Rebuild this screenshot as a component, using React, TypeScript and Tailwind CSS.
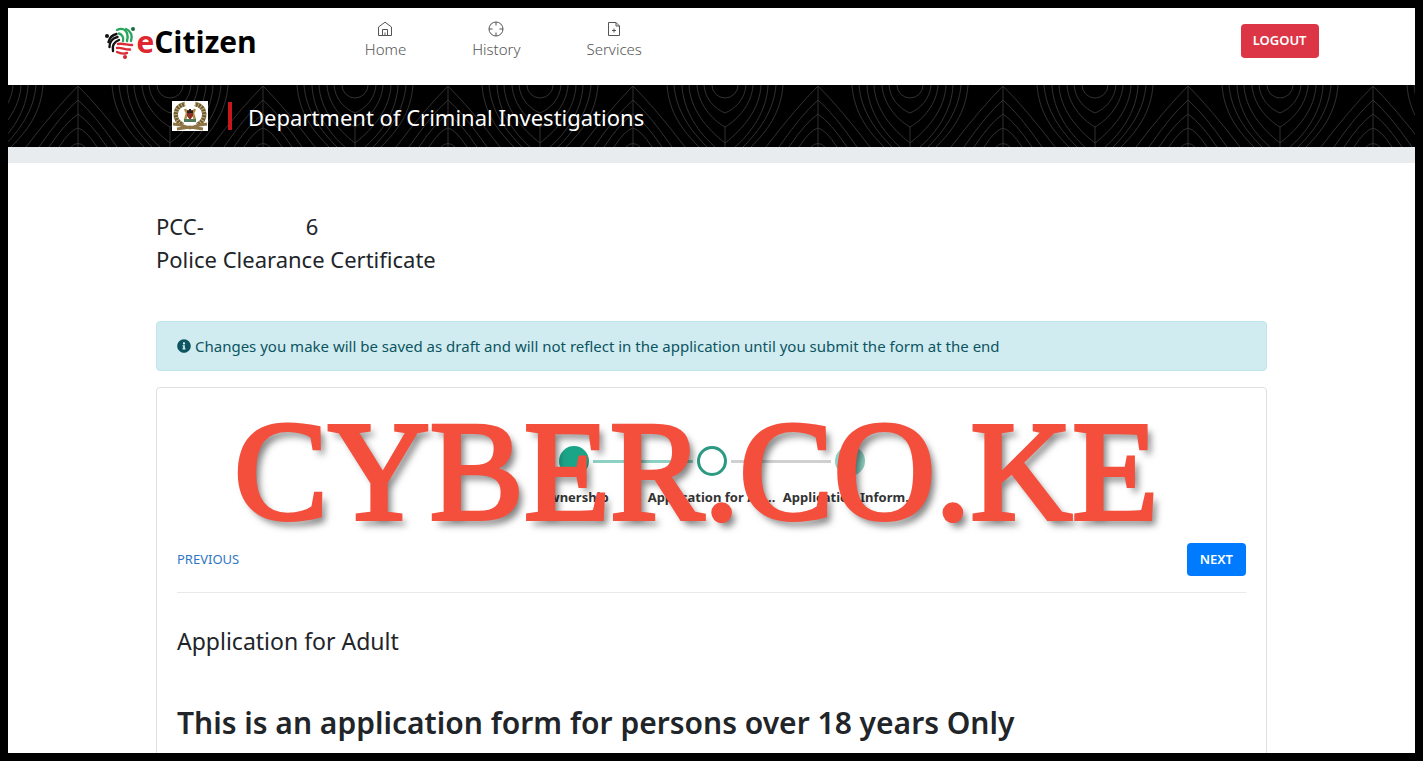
import React from 'react';
import { FaInfoCircle } from 'react-icons/fa';

const steps = [
  { label: 'Ownership', state: 'done' },
  { label: 'Application for Ad...', state: 'current' },
  { label: 'Application Inform...', state: 'pending' },
];

const circleStyles: Record<string, string> = {
  done: 'bg-[#1aa488]',
  current: 'border-[3px] border-[#2a9a82] bg-white',
  pending: 'bg-[#1aa488] opacity-50',
};

const HomeIcon = () => (
  <svg width="16" height="16" viewBox="0 0 16 16" fill="none" stroke="currentColor" strokeLinejoin="round">
    <path d="M1.500 6 8 1.200 14.500 6v8.500h-13z" />
    <path d="M5.500 14.500v-6h5v6M8 14.500v-3" />
  </svg>
);

const HistoryIcon = () => (
  <svg width="16" height="16" viewBox="0 0 16 16" fill="none" stroke="currentColor">
    <circle cx="8" cy="8" r="7" />
    <path d="M8 1v3.500M8 11.500V15M1 8h3.500M11.500 8H15" />
  </svg>
);

const ServicesIcon = () => (
  <svg width="16" height="16" viewBox="0 0 16 16" fill="none" stroke="currentColor" strokeLinejoin="round">
    <path d="M2.500 1.500h7.500l3.500 3.500v9.500h-11z" />
    <path d="M10 1.500V5h3.500M8 7.500v4M6 9.500h4" />
  </svg>
);

const links = [
  { label: 'Home', icon: HomeIcon },
  { label: 'History', icon: HistoryIcon },
  { label: 'Services', icon: ServicesIcon },
];

const Logo = () => (
  <a href="#" className="flex items-center" aria-label="eCitizen">
    <svg width="32" height="34" viewBox="0 0 32 34" fill="none" strokeWidth="2.400" strokeLinecap="round">
      <g stroke="#111">
        <path d="M3.500 17c1-4 4-7 8-8" />
        <path d="M4.500 22c0-5 3-9 8-10" />
        <path d="M8 26c-1-5 1-9 6-11" />
      </g>
      <g stroke="#2aa55e">
        <path d="M12 5c4-2 8-1 10 3 1 3 1 5 0 8" />
        <path d="M14 8.500c3 1 5 4 4 7.500" />
        <path d="M21 4c5 2 7 7 5 12" />
      </g>
      <g stroke="#dc2c38">
        <path d="M13 19c5-1 9 1 14 1" />
        <path d="M12 23c4-1 8 2 13 1.500" />
        <path d="M12 27c4 2 7 2 10 1" />
      </g>
      <circle cx="2" cy="11" r="2" fill="#111" />
      <circle cx="28" cy="4" r="2" fill="#1a6a3c" />
      <circle cx="20" cy="32" r="2" fill="#d8262f" />
    </svg>
    <span className="font-['Open_Sans'] text-[30px] leading-8 font-bold text-black">
      <span className="text-[#e0262f]">e</span>Citizen
    </span>
  </a>
);

const BannerPattern = () => (
  <svg className="absolute inset-0 h-full w-full" aria-hidden="true">
    <defs>
      <pattern id="waves" x="-23" width="185" height="62" patternUnits="userSpaceOnUse">
        <g fill="none" stroke="#303030">
          <path d="M93 1v61M0 42v20M185 42v20" />
          <path d="M41 62Q70 24 93 1Q116 24 145 62" />
          <path d="M54 62Q76 30 93 15Q110 30 132 62" />
          <path d="M64 62Q80 38 93 29Q106 38 122 62" />
          <path d="M74 62Q85 45 93 43Q101 45 112 62" />
          <path d="M86 62Q93 55 100 62" />
          {[0, 185].map((x) => (
            <g key={x} transform={`translate(${x} 0)`}>
              <path d="M-13 0a13 13 0 0 0 26 0" />
              <path d="M-21 0C-20 14-10 24 0 28C10 24 20 14 21 0" />
              <path d="M-28 0C-27 18-14 34 0 42C14 34 27 18 28 0" />
              <path d="M-36 0C-35 24-18 44 0 58C18 44 35 24 36 0" />
              <path d="M-43 0C-42 26-26 48-10 62M43 0C42 26 26 48 10 62" />
              <path d="M-51 0C-49 26-34 46-18 62M51 0C49 26 34 46 18 62" />
              <path d="M-58 0C-56 28-42 46-26 62M58 0C56 28 42 46 26 62" />
            </g>
          ))}
        </g>
      </pattern>
    </defs>
    <rect width="100%" height="100%" fill="url(#waves)" />
  </svg>
);

const Emblem = () => (
  <svg width="36" height="30" viewBox="0 0 36 30" fill="none" className="bg-white">
    <path d="M13 3C1 5 1 20 11 24M23 3c12 2 12 17 2 21" stroke="#6f5c34" strokeWidth="4.500" />
    <path d="M13 3C1 5 1 20 11 24M23 3c12 2 12 17 2 21" stroke="#c9b27a" strokeWidth="4" strokeDasharray="1 2" />
    <path d="M1 23l8 1 9 3 9-3 8-1M5 28l13-2 13 2" stroke="#8f7546" strokeWidth="2.800" />
    <path d="M13 8l2 4-2 7M23 8l-2 4 2 7" stroke="#b08f3c" strokeWidth="2.500" />
    <path d="M15 9h6v6l-3 4-3-4z" fill="#8c2f2a" />
    <path d="M15 11h6M18 8v3" stroke="#222" strokeWidth="2" />
    <path d="M12 18h12v3H12z" fill="#4f7a5a" />
  </svg>
);

export default function App() {
  return (
    <div className="h-screen overflow-hidden border-8 border-black bg-white font-['Noto_Sans',sans-serif] text-[#212529]">
      <header className="px-6">
        <div className="mx-auto flex h-[77px] max-w-[1214px] items-start justify-between">
          <div className="flex items-start">
            <div className="pt-[17px]">
              <Logo />
            </div>
            <nav className="ml-[108px] flex gap-[66px] pt-[13px]">
              {links.map(({ label, icon: Icon }) => (
                <a key={label} href="#" className="flex flex-col items-center text-[15px] leading-6 font-light text-[#555]">
                  <Icon />
                  {label}
                </a>
              ))}
            </nav>
          </div>
          <button className="mt-4 h-[34px] rounded bg-[#dc3545] px-3 text-[13px] font-semibold text-white">LOGOUT</button>
        </div>
      </header>

      <div className="relative h-[62px] bg-black">
        <BannerPattern />
        <div className="relative mx-auto flex h-full max-w-[1111px] items-center px-4">
          <Emblem />
          <div className="ml-5 h-7 w-1 bg-[#c8161d]" />
          <h1 className="ml-4 pt-0.5 text-[22px] text-white">Department of Criminal Investigations</h1>
        </div>
      </div>
      <div className="h-4 bg-[#e9ecef]" />

      <main className="mx-auto max-w-[1111px] pt-[47px]">
        <div className="text-[22px] leading-[33px]">
          <p className="flex gap-[102px]">
            <span>PCC-</span>
            <span>6</span>
          </p>
          <p>Police Clearance Certificate</p>
        </div>

        <div className="mt-[45px] flex h-[50px] items-center gap-1 rounded border border-[#bee5eb] bg-[#d1ecf1] px-5 text-[15px] text-[#0c5460]">
          <FaInfoCircle size={14} />
          Changes you make will be saved as draft and will not reflect in the application until you submit the form at the end
        </div>

        <section className="relative mt-4 rounded border border-[#dfdfdf] px-5 pt-[58px] pb-10">
          <ol className="flex justify-center">
            {steps.map(({ label, state }, i) => (
              <li key={label} className="relative w-[138px]">
                {i > 0 && (
                  <div className={`absolute top-[14px] right-[88px] h-[3px] w-[100px] ${i === 1 ? 'bg-[#8dd1c3]' : 'bg-[#d0d0d0]'}`} />
                )}
                <div className={`mx-auto size-[30px] rounded-full ${circleStyles[state]}`} />
                <p className="mt-[11px] text-center text-[13px] leading-5 font-bold whitespace-nowrap text-[#333]">{label}</p>
              </li>
            ))}
          </ol>

          <div className="mt-9 flex items-center justify-between border-b border-[#e9e9e9] pb-4">
            <button className="text-[13px] text-[#2f76c4]">PREVIOUS</button>
            <button className="h-[33px] rounded bg-[#007bff] px-[13px] text-[13px] font-semibold text-white">NEXT</button>
          </div>

          <h2 className="mt-8 text-[23px] leading-8">Application for Adult</h2>
          <h3 className="mt-[46px] text-[30px] leading-10 font-semibold whitespace-nowrap">
            This is an application form for persons over 18 years Only
          </h3>

          <div className="pointer-events-none absolute -top-0.5 left-[77px] font-['Liberation_Serif',serif] text-[141px] leading-[170px] whitespace-nowrap text-[#f44f3c] [-webkit-text-stroke:4px_#f44f3c] [text-shadow:5px_6px_7px_rgba(0,0,0,0.5)]">
            CYBER.CO.KE
          </div>
        </section>
      </main>
    </div>
  );
}
